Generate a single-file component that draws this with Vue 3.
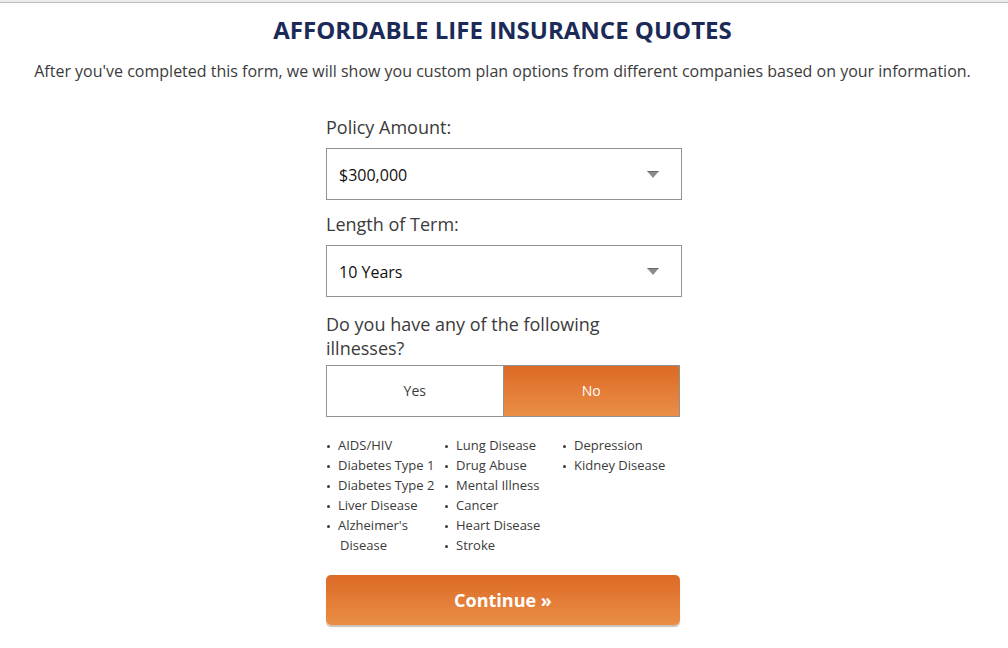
<script setup>
import { ref } from 'vue'

const amount = ref('$300,000')
const term = ref('10 Years')
const illness = ref('No')

const amounts = ['$100,000', '$200,000', '$300,000', '$400,000', '$500,000']
const terms = ['10 Years', '15 Years', '20 Years', '30 Years']
const illnesses = [
  ['AIDS/HIV', 'Diabetes Type 1', 'Diabetes Type 2', 'Liver Disease', "Alzheimer's Disease"],
  ['Lung Disease', 'Drug Abuse', 'Mental Illness', 'Cancer', 'Heart Disease', 'Stroke'],
  ['Depression', 'Kidney Disease']
]
</script>

<template>
  <div class="page">
    <header class="intro">
      <h1>AFFORDABLE LIFE INSURANCE QUOTES</h1>
      <p>After you've completed this form, we will show you custom plan options from different companies based on your information.</p>
    </header>

    <form class="quote" @submit.prevent>
      <div class="field">
        <label for="amount">Policy Amount:</label>
        <div class="select">
          <select id="amount" v-model="amount">
            <option v-for="a in amounts" :key="a">{{ a }}</option>
          </select>
          <svg class="arrow" width="12" height="7" viewBox="0 0 12 7" aria-hidden="true">
            <path d="M0 0H12L6 7Z" fill="#8c8c8c" />
            <path d="M0 0H12L11 1H1Z" fill="#6a6a6a" />
          </svg>
        </div>
      </div>

      <div class="field">
        <label for="term">Length of Term:</label>
        <div class="select">
          <select id="term" v-model="term">
            <option v-for="t in terms" :key="t">{{ t }}</option>
          </select>
          <svg class="arrow" width="12" height="7" viewBox="0 0 12 7" aria-hidden="true">
            <path d="M0 0H12L6 7Z" fill="#8c8c8c" />
            <path d="M0 0H12L11 1H1Z" fill="#6a6a6a" />
          </svg>
        </div>
      </div>

      <fieldset>
        <legend>Do you have any of the following illnesses?</legend>
        <div class="toggle">
          <label v-for="o in ['Yes', 'No']" :key="o" :class="{ on: illness === o }">
            <input v-model="illness" type="radio" name="illness" :value="o">{{ o }}
          </label>
        </div>
      </fieldset>

      <div class="lists">
        <ul v-for="(column, i) in illnesses" :key="i">
          <li v-for="name in column" :key="name">{{ name }}</li>
        </ul>
      </div>

      <button class="continue" type="submit">Continue »</button>
    </form>
  </div>
</template>

<style>
body {
  background: #fff;
}
</style>

<style scoped>
.page {
  border-top: 2px solid #ececec;
  color: #3b3b3b;
  font-family: "Open Sans", "Noto Sans", sans-serif;
  font-size: 16px;
  line-height: 24px;
}

.intro {
  border-top: 1px solid #bdbdbd;
  padding: 11px 18px 0 15px;
  text-align: center;
}

h1 {
  margin: 0 0 13px;
  color: #1b2a57;
  font-size: 24px;
  font-weight: 700;
  line-height: 32px;
}

p {
  margin: 0;
}

.quote {
  box-sizing: border-box;
  max-width: 356px;
  margin: 32px auto 20px;
}

.field {
  margin-bottom: 12px;
}

.field > label {
  display: block;
  margin-bottom: 9px;
  font-size: 18px;
}

.select {
  display: grid;
  align-items: center;
}

.select > * {
  grid-area: 1 / 1;
}

select {
  appearance: none;
  box-sizing: border-box;
  width: 100%;
  height: 52px;
  margin: 0;
  padding: 2px 48px 0 12px;
  border: 1px solid #909295;
  border-radius: 0;
  background: #fff;
  color: #111;
  font: inherit;
}

.arrow {
  justify-self: end;
  margin-right: 23px;
  pointer-events: none;
}

fieldset {
  min-width: 0;
  margin: 15px 2px 0 0;
  padding: 0;
  border: 0;
}

legend {
  max-width: 300px;
  padding: 0 0 5px;
  font-size: 18px;
}

.toggle {
  display: flex;
  box-sizing: border-box;
  height: 52px;
  border: 1px solid #909295;
}

.toggle label {
  display: flex;
  flex: 1;
  align-items: center;
  justify-content: center;
  font-size: 14px;
  cursor: pointer;
}

.toggle label + label {
  border-left: 1px solid #909295;
}

.toggle .on {
  background: linear-gradient(#dc6a26, #ea8e46);
  color: #fff;
}

.toggle input {
  appearance: none;
  width: 0;
  margin: 0;
}

.lists {
  display: grid;
  grid-template-columns: repeat(3, 1fr);
  margin: 18px 2px 20px 0;
  font-size: 13px;
  line-height: 20px;
}

ul {
  margin: 0;
  padding: 0;
  list-style: none;
}

li {
  padding-left: 14px;
  text-indent: -2px;
}

li::before {
  content: "";
  display: inline-block;
  width: 3px;
  height: 3px;
  margin: 0 8px 2px -11px;
  border-radius: 50%;
  background: #3b3b3b;
}

.continue {
  display: block;
  width: calc(100% - 2px);
  height: 50px;
  padding: 0;
  border: 0;
  border-radius: 5px;
  background: linear-gradient(#dc6a26, #ea8e46);
  box-shadow: 0 2px 1px #cfc0b6;
  color: #fff;
  font: inherit;
  font-size: 18px;
  font-weight: 700;
  cursor: pointer;
}
</style>
